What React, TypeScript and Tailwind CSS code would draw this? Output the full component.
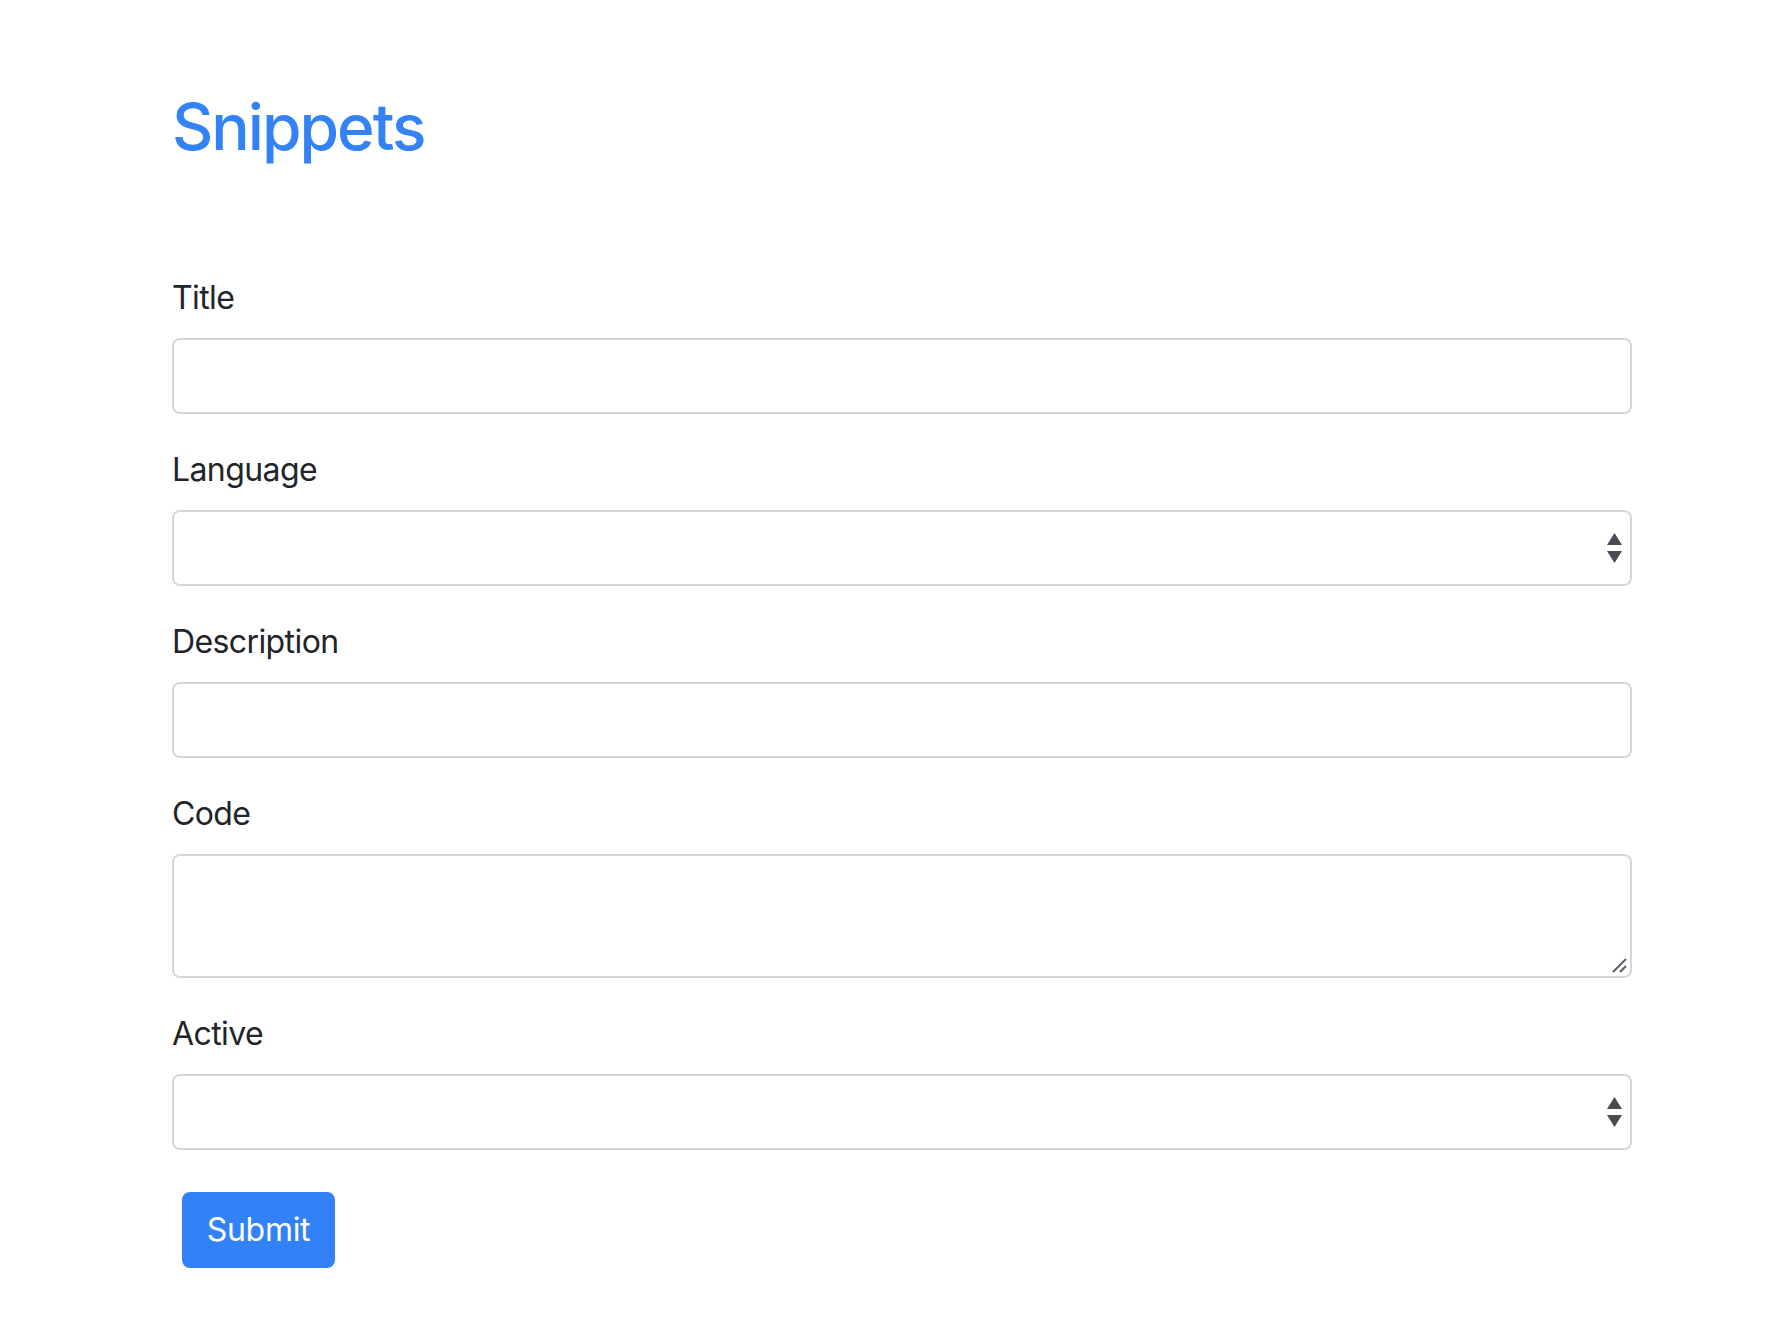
import React from "react";

const font = { fontFamily: "Inter, 'Noto Sans', sans-serif" };

function Arrows() {
  return (
    <svg
      className="pointer-events-none absolute right-[10px] top-1/2 -translate-y-1/2"
      width="15"
      height="30"
      viewBox="0 0 15 30"
    >
      <path d="M7.5 0L15 12H0z" fill="#474c52" />
      <path d="M7.5 30L15 18H0z" fill="#474c52" />
    </svg>
  );
}

function Label({ children }: { children: React.ReactNode }) {
  return (
    <label className="block text-[32px] leading-[48px] tracking-[-0.6px] text-[#212529] mb-[16px]">
      {children}
    </label>
  );
}

const box =
  "block w-[1460px] rounded-[8px] border-2 border-[#d3d7dc] bg-white outline-none";

export default function App() {
  return (
    <div className="min-h-[1338px] bg-white pl-[172px] pt-[88px]" style={font}>
      <h1 className="text-[64px] leading-[77px] font-medium text-[#3382f6] tracking-[-2px]">Snippets</h1>
      <form className="mt-[109px]" onSubmit={(e) => e.preventDefault()}>
        <div className="mb-[32px]">
          <Label>Title</Label>
          <input type="text" className={box + " h-[76px]"} />
        </div>
        <div className="mb-[32px]">
          <Label>Language</Label>
          <div className="relative w-[1460px]">
            <select className={box + " h-[76px] appearance-none"} defaultValue="">
              <option value=""></option>
            </select>
            <Arrows />
          </div>
        </div>
        <div className="mb-[32px]">
          <Label>Description</Label>
          <input type="text" className={box + " h-[76px]"} />
        </div>
        <div className="mb-[32px]">
          <Label>Code</Label>
          <div className="relative w-[1460px]">
            <textarea className={box + " h-[124px] resize-none"} />
            <svg
              className="pointer-events-none absolute right-[4px] bottom-[4px]"
              width="18"
              height="18"
              viewBox="0 0 18 18"
            >
              <path d="M3 16L16 3" stroke="#5a5f66" strokeWidth="2" />
              <path d="M10 16L16 10" stroke="#5a5f66" strokeWidth="2" />
            </svg>
          </div>
        </div>
        <div>
          <Label>Active</Label>
          <div className="relative w-[1460px]">
            <select className={box + " h-[76px] appearance-none"} defaultValue="">
              <option value=""></option>
            </select>
            <Arrows />
          </div>
        </div>
        <button
          type="submit"
          className="mt-[42px] ml-[10px] h-[76px] w-[153px] rounded-[8px] bg-[#3381f6] text-[32px] tracking-[-0.3px] text-white"
        >
          Submit
        </button>
      </form>
    </div>
  );
}
